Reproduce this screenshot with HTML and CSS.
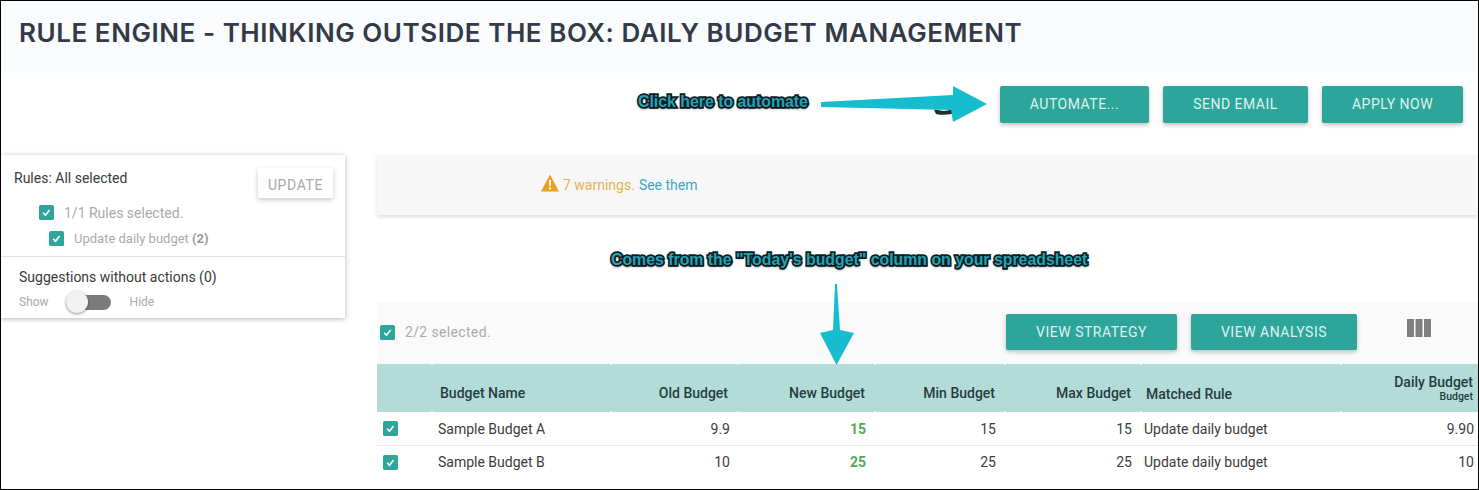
FILE: index.html
```html
<!DOCTYPE html>
<html lang="en">
<head>
<meta charset="utf-8">
<title>Rule Engine - Daily Budget Management</title>
<link rel="stylesheet" href="styles.css">
</head>
<body>
<div class="frame">
  <header class="page-head">
    <h1 class="page-title">RULE ENGINE - THINKING OUTSIDE THE BOX: DAILY BUDGET MANAGEMENT</h1>
  </header>

  <div class="top-actions">
    <button class="btn btn-automate">AUTOMATE...</button>
    <button class="btn btn-email">SEND EMAIL</button>
    <button class="btn btn-apply">APPLY NOW</button>
  </div>

  <div class="content">
    <aside class="filters">
      <div class="filters-rules">
        <div class="filters-head">
          <span class="filters-title">Rules: All selected</span>
          <button class="btn-update">UPDATE</button>
        </div>
        <label class="check-line check-line-a">
          <svg class="check" viewBox="0 0 16 16"><rect width="16" height="16" rx="2"/><path d="M4.5 8.3l2.4 2.6 4.4-5.6"/></svg>
          <span>1/1 Rules selected.</span>
        </label>
        <label class="check-line check-line-b">
          <svg class="check" viewBox="0 0 16 16"><rect width="16" height="16" rx="2"/><path d="M4.5 8.3l2.4 2.6 4.4-5.6"/></svg>
          <span>Update daily budget <b>(2)</b></span>
        </label>
      </div>
      <div class="filters-sugg">
        <div class="sugg-title">Suggestions without actions (0)</div>
        <div class="sugg-toggle">
          <span>Show</span>
          <span class="switch"><span class="switch-knob"></span></span>
          <span>Hide</span>
        </div>
      </div>
    </aside>

    <main class="results">
      <div class="warn-bar">
        <svg class="warn-icon" viewBox="0 0 18 18"><path class="warn-tri" d="M9 0.500L18 17.500H0z"/><path class="warn-mark" d="M8 6h2l-.3 6.200H8.300zM8 13.400h2v2H8z"/></svg>
        <span class="warn-text">7 warnings.</span>
        <a class="warn-link">See them</a>
      </div>

      <div class="grid-tools">
        <svg class="check" viewBox="0 0 16 16"><rect width="16" height="16" rx="2"/><path d="M4.5 8.3l2.4 2.6 4.4-5.6"/></svg>
        <span class="grid-count">2/2 selected.</span>
        <button class="btn btn-strategy">VIEW STRATEGY</button>
        <button class="btn btn-analysis">VIEW ANALYSIS</button>
        <svg class="cols-icon" viewBox="0 0 24 18"><path d="M0 0h7v18H0zM8.500 0h7v18h-7zM17 0h7v18h-7z"/></svg>
      </div>

      <div class="row row-head">
        <div class="cell"></div>
        <div class="cell cell-name">Budget Name</div>
        <div class="cell num">Old Budget</div>
        <div class="cell num">New Budget</div>
        <div class="cell num">Min Budget</div>
        <div class="cell num">Max Budget</div>
        <div class="cell cell-rule">Matched Rule</div>
        <div class="cell num cell-daily">Daily Budget<small>Budget</small></div>
      </div>
      <div class="row row-body row-line">
        <div class="cell"><svg class="check" viewBox="0 0 16 16"><rect width="16" height="16" rx="2"/><path d="M4.5 8.3l2.4 2.6 4.4-5.6"/></svg></div>
        <div class="cell cell-name">Sample Budget A</div>
        <div class="cell num cell-old">9.9</div>
        <div class="cell num new">15</div>
        <div class="cell num">15</div>
        <div class="cell num">15</div>
        <div class="cell cell-rule">Update daily budget</div>
        <div class="cell num">9.90</div>
      </div>
      <div class="row row-body">
        <div class="cell"><svg class="check" viewBox="0 0 16 16"><rect width="16" height="16" rx="2"/><path d="M4.5 8.3l2.4 2.6 4.4-5.6"/></svg></div>
        <div class="cell cell-name">Sample Budget B</div>
        <div class="cell num cell-old">10</div>
        <div class="cell num new">25</div>
        <div class="cell num">25</div>
        <div class="cell num">25</div>
        <div class="cell cell-rule">Update daily budget</div>
        <div class="cell num">10</div>
      </div>
    </main>
  </div>

  <span class="note note-automate">Click here to automate</span>
  <span class="note note-budget">Comes from the "Today's budget" column on your spreadsheet</span>
  <svg class="arrow arrow-right" viewBox="0 0 170 40">
    <path class="smudge" d="M114 25c4-1 7 1 10 1s6-2 9-1c2 1 1 4-1 4-6 1-14 1-16 0z"/>
    <path d="M1 17L133 10 133 1 167 19 133 37 131 25 1 22z"/>
  </svg>
  <svg class="arrow arrow-down" viewBox="0 0 36 82">
    <path d="M17 0h2L22 46 36 49 18.500 81 2 49 15 46z"/>
  </svg>
</div>
</body>
</html>
```
FILE: styles.css
```css
* { box-sizing: border-box; }
html, body { margin: 0; padding: 0; background: #fff; overflow: hidden; }
body { font-family: Roboto, "Liberation Sans", sans-serif; color: #333; }

.frame {
  position: relative;
  width: 1479px;
  height: 490px;
  border: 1px solid #000;
  overflow: hidden;
}

.page-head {
  height: 71px;
  padding: 17px 0 0 18px;
  background: #f9fbfd;
}
.page-title {
  margin: 0;
  font-family: Inter, "Open Sans", sans-serif;
  font-size: 26px;
  line-height: 30px;
  font-weight: 600;
  letter-spacing: 0.55px;
  color: #333a47;
  white-space: nowrap;
}

.btn {
  height: 36px;
  border: 0;
  border-radius: 2px;
  background: #2ea59a;
  color: #dff3f0;
  font-family: Roboto, sans-serif;
  font-size: 14px;
  letter-spacing: 0.5px;
  padding: 0 0 1px;
  box-shadow: 0 2px 4px rgba(0, 0, 0, .25);
}
.top-actions {
  display: flex;
  justify-content: flex-end;
  gap: 14px;
  height: 37px;
  margin-top: 14px;
  padding-right: 15px;
}
.top-actions .btn { height: 37px; padding-bottom: 2px; }
.btn-automate { width: 149px; }
.btn-email { width: 145px; }
.btn-apply { width: 141px; }

.content {
  display: flex;
  align-items: flex-start;
  margin-top: 32px;
}

.filters {
  flex: none;
  width: 344px;
  height: 163px;
  background: #fff;
  box-shadow: 0 1px 5px rgba(0, 0, 0, .3);
}
.filters-rules {
  height: 102px;
  border-bottom: 1px solid #e2e2e2;
  padding: 13px 0 0 13px;
}
.filters-head {
  display: flex;
  justify-content: space-between;
  height: 37px;
  padding-right: 12px;
}
.filters-title { font-size: 14px; line-height: 20px; color: #3a3a3a; }
.btn-update {
  width: 75px;
  height: 30px;
  border: 0;
  background: #fff;
  color: #a8a8a8;
  font-family: Roboto, sans-serif;
  font-size: 14px;
  letter-spacing: 0.6px;
  padding: 4px 0 0;
  box-shadow: 0 2px 5px rgba(0, 0, 0, .22);
}

.check { display: block; width: 15px; height: 15px; flex: none; }
.check rect { fill: #2ea59a; }
.check path { fill: none; stroke: #fff; stroke-width: 1.8; }

.check-line { display: flex; align-items: center; gap: 10px; color: #aaa; }
.check-line-a { font-size: 14px; height: 15px; margin: 0 0 11px 25px; }
.check-line-b { font-size: 13px; height: 15px; margin-left: 35px; }
.check-line b { font-weight: 700; color: #999; }

.filters-sugg { padding: 11px 0 0 18px; }
.sugg-title { font-size: 14px; line-height: 18px; color: #3a3a3a; }
.sugg-toggle {
  display: flex;
  align-items: center;
  height: 24px;
  margin-top: 4px;
  font-size: 12px;
  color: #aaa;
}
.switch {
  position: relative;
  display: block;
  width: 45px;
  height: 15px;
  margin: 0 19px 0 17px;
  border-radius: 8px;
  background: #7b7b7b;
}
.switch-knob {
  position: absolute;
  left: 0;
  top: -4px;
  width: 22px;
  height: 22px;
  border-radius: 50%;
  background: #f2f2f2;
  box-shadow: 0 1px 3px rgba(0, 0, 0, .45);
}

.results { flex: none; width: 1101px; margin-left: 32px; }

.warn-bar {
  display: flex;
  align-items: center;
  height: 60px;
  padding: 0 0 0 164px;
  margin-bottom: 87px;
  background: #f7f7f7;
  box-shadow: 0 2px 4px rgba(0, 0, 0, .14);
  font-size: 14px;
}
.warn-icon { display: block; width: 18px; height: 18px; margin-right: 4px; position: relative; top: -2px; }
.warn-tri { fill: #ee9f22; }
.warn-mark { fill: #fff; }
.warn-text { color: #e4b24f; margin-right: 4px; }
.warn-link { color: #3fa6bf; }

.grid-tools {
  display: flex;
  align-items: center;
  height: 62px;
  padding: 0 0 2px 3px;
  background: #fafafb;
}
.grid-count { margin-left: 10px; font-size: 14px; letter-spacing: 0.35px; color: #aaa; }
.btn-strategy { width: 171px; margin-left: auto; }
.btn-analysis { width: 166px; margin-left: 14px; }
.cols-icon { display: block; width: 24px; height: 18px; margin: -8px 47px 0 50px; fill: #7f7f7f; }

.row {
  display: grid;
  grid-template-columns: 54px 179px 127px 137px 130px 136px 200px 138px;
}
.row-head {
  height: 48px;
  background: #b3dcd9;
  font-size: 14px;
  font-weight: 500;
  color: #263c3f;
}
.row-head .cell {
  padding-top: 21px;
  line-height: 16px;
  background:
    linear-gradient(#e4f2f1, #e4f2f1) left top / 2px 1px no-repeat,
    linear-gradient(#e4f2f1, #e4f2f1) left bottom / 2px 1px no-repeat;
}
.row-head .cell:first-child { background: none; }
.row-head .num { padding-right: 9px; }
.row-head .cell-name { padding-left: 9px; }
.row-head .cell-rule { padding-left: 6px; padding-top: 22px; }
.row-head .cell-daily { padding-top: 10px; padding-right: 5px; }
.cell-daily small { display: block; font-size: 10.5px; line-height: 13px; }

.row-body { height: 32px; align-items: center; font-size: 14px; color: #3c3c3c; }
.row-line { height: 34px; border-bottom: 1px solid #e8e8e8; }
.row-body .check { margin-left: 6px; }
.row-body .cell-name { padding-left: 7px; }
.row-body .cell-rule { padding-left: 4px; }
.num { text-align: right; padding-right: 8px; }
.row-body .cell-old { padding-right: 7px; }
.row-body .cell:last-child { padding-right: 4px; }
.new { font-weight: 700; color: #57a85a; }

.note {
  position: absolute;
  font-family: "Liberation Sans", Arial, sans-serif;
  font-weight: 700;
  font-size: 15.85px;
  line-height: 18px;
  white-space: nowrap;
  color: #23a3b4;
  -webkit-text-stroke: 3.5px #0b2228;
  paint-order: stroke fill;
  text-shadow: 0 2px 3px rgba(0, 0, 0, .55);
}
.note-automate { left: 637px; top: 92px; }
.note-budget { left: 610px; top: 250px; }

.arrow { position: absolute; display: block; fill: #17bccf; }
.arrow-right { left: 819px; top: 84px; width: 170px; height: 40px; }
.arrow-down { left: 817px; top: 283px; width: 36px; height: 82px; }
.smudge { fill: #1f2d33; }
```
